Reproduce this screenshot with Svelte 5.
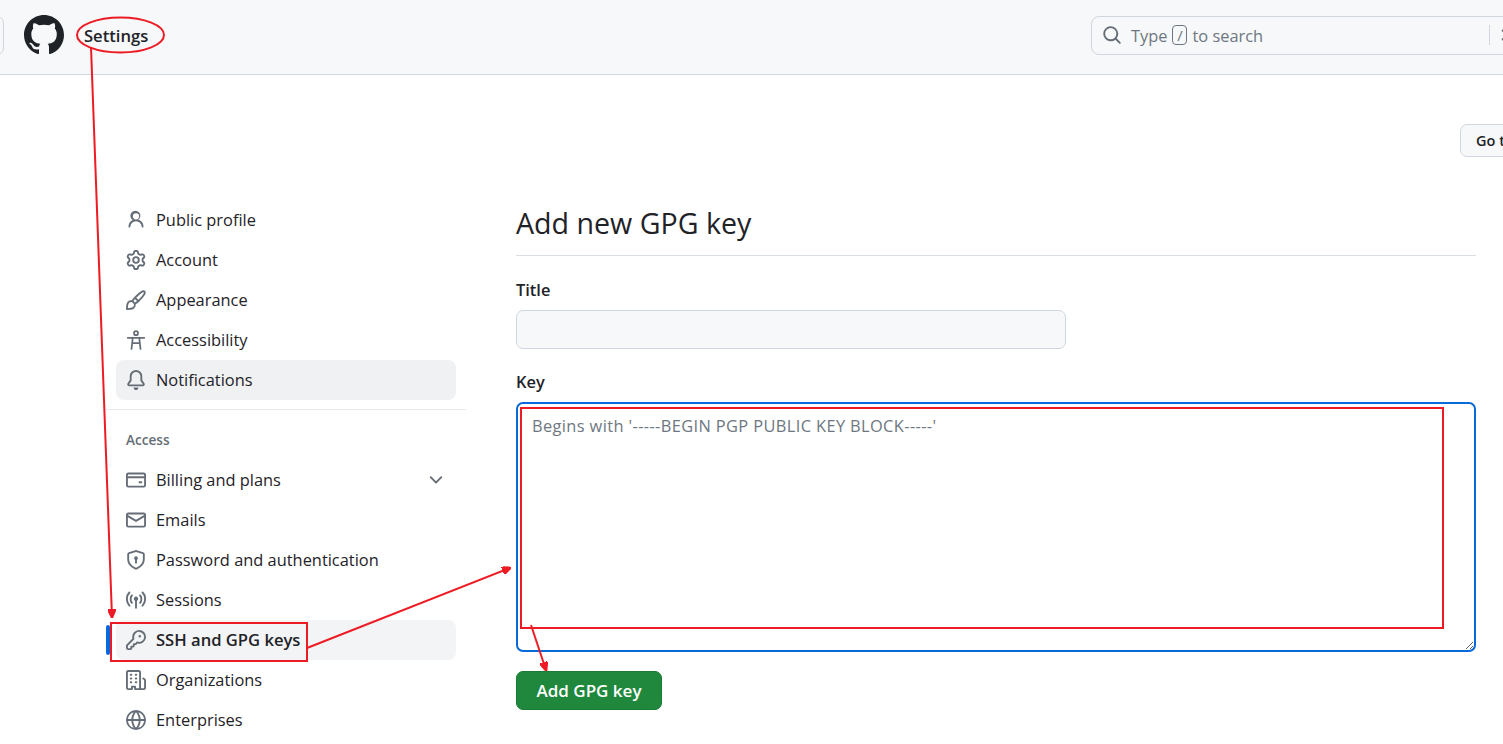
<script lang="ts">
  const icons: Record<string, string> = {
    person: "M10.561 8.073a6.005 6.005 0 0 1 3.432 5.142.75.75 0 1 1-1.498.07 4.5 4.5 0 0 0-8.99 0 .75.75 0 1 1-1.498-.07 6.004 6.004 0 0 1 3.431-5.142 3.999 3.999 0 1 1 4.123 0ZM10.5 5a2.5 2.5 0 1 0-5 0 2.5 2.5 0 0 0 5 0Z",
    gear: "M8 0a8.2 8.2 0 0 1 .701.031C9.444.095 9.99.645 10.16 1.29l.288 1.107c.018.066.079.158.212.224.231.114.454.243.668.386.123.082.233.09.299.071l1.103-.303c.644-.176 1.392.021 1.82.63.27.385.506.792.704 1.218.315.675.111 1.422-.364 1.891l-.814.806c-.049.048-.098.147-.088.294.016.257.016.515 0 .772-.01.147.038.246.088.294l.814.806c.475.469.679 1.216.364 1.891a7.977 7.977 0 0 1-.704 1.217c-.428.61-1.176.807-1.82.63l-1.102-.302c-.067-.019-.177-.011-.3.071a5.909 5.909 0 0 1-.668.386c-.133.066-.194.158-.211.224l-.29 1.106c-.168.646-.715 1.196-1.458 1.26a8.006 8.006 0 0 1-1.402 0c-.743-.064-1.289-.614-1.458-1.26l-.289-1.106c-.018-.066-.079-.158-.212-.224a5.738 5.738 0 0 1-.668-.386c-.123-.082-.233-.09-.299-.071l-1.103.303c-.644.176-1.392-.021-1.82-.63a8.12 8.12 0 0 1-.704-1.218c-.315-.675-.111-1.422.363-1.891l.815-.806c.05-.048.098-.147.088-.294a6.214 6.214 0 0 1 0-.772c.01-.147-.038-.246-.088-.294l-.815-.806C.635 6.045.431 5.298.746 4.623a7.92 7.92 0 0 1 .704-1.217c.428-.61 1.176-.807 1.82-.63l1.102.302c.067.019.177.011.3-.071.214-.143.437-.272.668-.386.133-.066.194-.158.211-.224l.29-1.106C6.009.645 6.556.095 7.299.03 7.53.01 7.764 0 8 0Zm-.571 1.525c-.036.003-.108.036-.137.146l-.289 1.105c-.147.561-.549.967-.998 1.189-.173.086-.34.183-.5.29-.417.278-.97.423-1.529.27l-1.103-.303c-.109-.03-.175.016-.195.045-.22.312-.412.644-.573.99-.014.031-.021.11.059.19l.815.806c.411.406.562.957.53 1.456a4.709 4.709 0 0 0 0 .582c.032.499-.119 1.05-.53 1.456l-.815.806c-.081.08-.073.159-.059.19.162.346.353.677.573.989.02.03.085.076.195.046l1.102-.303c.56-.153 1.113-.008 1.53.27.161.107.328.204.501.29.447.222.85.629.997 1.189l.289 1.105c.029.109.101.143.137.146a6.6 6.6 0 0 0 1.142 0c.036-.003.108-.036.137-.146l.289-1.105c.147-.561.549-.967.998-1.189.173-.086.34-.183.5-.29.417-.278.97-.423 1.529-.27l1.103.303c.109.029.175-.016.195-.045.22-.313.411-.644.573-.99.014-.031.021-.11-.059-.19l-.815-.806c-.411-.406-.562-.957-.53-1.456a4.709 4.709 0 0 0 0-.582c-.032-.499.119-1.05.53-1.456l.815-.806c.081-.08.073-.159.059-.19a6.464 6.464 0 0 0-.573-.989c-.02-.03-.085-.076-.195-.046l-1.102.303c-.56.153-1.113.008-1.53-.27a4.44 4.44 0 0 0-.501-.29c-.447-.222-.85-.629-.997-1.189l-.289-1.105c-.029-.11-.101-.143-.137-.146a6.6 6.6 0 0 0-1.142 0ZM11 8a3 3 0 1 1-6 0 3 3 0 0 1 6 0ZM9.5 8a1.5 1.5 0 1 0-3.001.001A1.5 1.5 0 0 0 9.5 8Z",
    brush: "M11.134 1.535c.7-.509 1.416-.942 2.076-1.155.649-.21 1.463-.267 2.069.34.603.601.568 1.411.368 2.07-.202.668-.624 1.39-1.125 2.096-1.011 1.424-2.496 2.987-3.775 4.249-1.098 1.084-2.132 1.839-3.04 2.3a3.744 3.744 0 0 1-1.055 3.217c-.431.431-1.065.691-1.657.861-.614.177-1.294.287-1.914.357A21.151 21.151 0 0 1 .797 16H.743l.007-.75H.749L.742 16a.75.75 0 0 1-.743-.742l.743-.008-.742.007v-.054a21.25 21.25 0 0 1 .13-2.284c.067-.647.187-1.287.358-1.914.17-.591.43-1.226.86-1.657a3.746 3.746 0 0 1 3.227-1.054c.466-.893 1.225-1.907 2.314-2.982 1.271-1.255 2.833-2.75 4.245-3.777ZM1.62 13.089c-.051.464-.086.929-.104 1.395.466-.018.932-.053 1.396-.104a10.511 10.511 0 0 0 1.668-.309c.526-.151.856-.325 1.011-.48a2.25 2.25 0 1 0-3.182-3.182c-.155.155-.329.485-.48 1.01a10.515 10.515 0 0 0-.309 1.67Zm10.396-10.34c-1.224.89-2.605 2.189-3.822 3.384l1.718 1.718c1.21-1.205 2.51-2.597 3.387-3.833.47-.662.78-1.227.912-1.662.134-.444.032-.551.009-.575h-.001V1.78c-.014-.014-.113-.113-.548.027-.432.14-.995.462-1.655.942Zm-4.832 7.266-.001.001a9.859 9.859 0 0 0 1.63-1.142L7.155 7.216a9.7 9.7 0 0 0-1.161 1.607c.482.302.889.71 1.19 1.192Z",
    bell: "M8 16c.9 0 1.7-.6 1.9-1.5.1-.3-.1-.5-.4-.5h-3c-.3 0-.5.2-.4.5.2.9 1 1.5 1.9 1.5ZM3 5a5 5 0 0 1 10 0v2.947c0 .05.015.098.042.139l1.703 2.555A1.519 1.519 0 0 1 13.482 13H2.518a1.516 1.516 0 0 1-1.263-2.36l1.703-2.554A.255.255 0 0 0 3 7.947Zm5-3.5A3.5 3.5 0 0 0 4.5 5v2.947c0 .346-.102.683-.294.97l-1.703 2.556a.017.017 0 0 0-.003.01l.001.006c0 .002.002.004.004.006l.006.004.007.001h10.964l.007-.001.006-.004.004-.006.001-.007a.017.017 0 0 0-.003-.01l-1.703-2.554a1.745 1.745 0 0 1-.294-.97V5A3.5 3.5 0 0 0 8 1.5Z",
    card: "M10.75 9a.75.75 0 0 0 0 1.5h1.5a.75.75 0 0 0 0-1.5h-1.5ZM0 3.75C0 2.784.784 2 1.75 2h12.5c.966 0 1.75.784 1.75 1.75v8.5A1.75 1.75 0 0 1 14.25 14H1.75A1.75 1.75 0 0 1 0 12.25ZM14.5 6.5h-13v5.75c0 .138.112.25.25.25h12.5a.25.25 0 0 0 .25-.25Zm0-2.75a.25.25 0 0 0-.25-.25H1.75a.25.25 0 0 0-.25.25V5h13Z",
    mail: "M1.75 2h12.5c.966 0 1.75.784 1.75 1.75v8.5A1.75 1.75 0 0 1 14.25 14H1.75A1.75 1.75 0 0 1 0 12.25v-8.5C0 2.784.784 2 1.75 2ZM1.5 12.251c0 .138.112.25.25.25h12.5a.25.25 0 0 0 .25-.25V5.809L8.38 9.397a.75.75 0 0 1-.76 0L1.5 5.809v6.442Zm13-8.181v-.32a.25.25 0 0 0-.25-.25H1.75a.25.25 0 0 0-.25.25v.32L8 7.88Z",
    shield: "m8.533.133 5.25 1.68A1.75 1.75 0 0 1 15 3.48V7c0 1.566-.32 3.182-1.303 4.682-.983 1.498-2.585 2.813-5.032 3.855a1.697 1.697 0 0 1-1.33 0c-2.447-1.042-4.049-2.357-5.032-3.855C1.32 10.182 1 8.566 1 7V3.48a1.75 1.75 0 0 1 1.217-1.667l5.25-1.68a1.748 1.748 0 0 1 1.066 0Zm-.61 1.429.001.001-5.25 1.68a.251.251 0 0 0-.174.237V7c0 1.36.275 2.666 1.057 3.859.784 1.194 2.121 2.342 4.366 3.298a.196.196 0 0 0 .154 0c2.245-.957 3.582-2.103 4.366-3.297C13.225 9.666 13.5 8.358 13.5 7V3.48a.25.25 0 0 0-.174-.238l-5.25-1.68a.25.25 0 0 0-.153 0ZM9.5 6.5c0 .536-.286 1.032-.75 1.3v2.45a.75.75 0 0 1-1.5 0V7.8A1.5 1.5 0 1 1 9.5 6.5Z",
    broadcast: "M8.75 8.582v5.668a.75.75 0 0 1-1.5 0V8.582a1.75 1.75 0 1 1 1.5 0Zm3.983-7.125a.75.75 0 0 1 1.06.026A7.72 7.72 0 0 1 16 7.25a7.72 7.72 0 0 1-2.207 5.767.75.75 0 1 1-1.086-1.034A6.22 6.22 0 0 0 14.5 7.25a6.22 6.22 0 0 0-1.793-4.733.75.75 0 0 1 .026-1.06Zm-9.466 0c.3.286.312.76.026 1.06A6.22 6.22 0 0 0 1.5 7.25a6.22 6.22 0 0 0 1.793 4.733.75.75 0 1 1-1.086 1.034A7.72 7.72 0 0 1 0 7.25a7.72 7.72 0 0 1 2.207-5.767.75.75 0 0 1 1.06-.026Zm8.556 2.321A4.72 4.72 0 0 1 13 7.25a4.72 4.72 0 0 1-1.177 3.472.75.75 0 1 1-1.146-.967A3.22 3.22 0 0 0 11.5 7.25a3.22 3.22 0 0 0-.823-2.505.75.75 0 0 1 1.146-.967Zm-6.492.958A3.22 3.22 0 0 0 4.5 7.25a3.22 3.22 0 0 0 .823 2.505.75.75 0 0 1-1.146.967A4.72 4.72 0 0 1 3 7.25a4.72 4.72 0 0 1 1.177-3.472.75.75 0 0 1 1.146.967Z",
    key: "M10.5 0a5.499 5.499 0 1 1-1.288 10.848l-.932.932a.749.749 0 0 1-.53.22H7v.75a.749.749 0 0 1-.22.53l-.5.5a.749.749 0 0 1-.53.22H5v.75a.749.749 0 0 1-.22.53l-.5.5a.749.749 0 0 1-.53.22h-2A1.75 1.75 0 0 1 0 14.25v-2c0-.199.079-.389.22-.53l4.932-4.932A5.5 5.5 0 0 1 10.5 0Zm-4 5.5c-.001.431.069.86.205 1.269a.75.75 0 0 1-.181.768L1.5 12.56v1.69c0 .138.112.25.25.25h1.69l.06-.06v-1.19a.75.75 0 0 1 .75-.75h1.19l.06-.06v-1.19a.75.75 0 0 1 .75-.75h1.19l1.023-1.025a.75.75 0 0 1 .768-.18A4 4 0 1 0 6.5 5.5ZM11 6a1 1 0 1 1 0-2 1 1 0 0 1 0 2Z",
    org: "M1.75 16A1.75 1.75 0 0 1 0 14.25V1.75C0 .784.784 0 1.75 0h8.5C11.216 0 12 .784 12 1.75v12.5c0 .085-.006.168-.018.25h2.268a.25.25 0 0 0 .25-.25V8.285a.25.25 0 0 0-.111-.208l-1.055-.703a.749.749 0 1 1 .832-1.248l1.055.703c.487.325.779.871.779 1.456v5.965A1.75 1.75 0 0 1 14.25 16h-3.5a.766.766 0 0 1-.197-.026c-.099.017-.2.026-.303.026h-3a.75.75 0 0 1-.75-.75V14h-1v1.25a.75.75 0 0 1-.75.75Zm-.25-1.75c0 .138.112.25.25.25H4v-1.25a.75.75 0 0 1 .75-.75h2.5a.75.75 0 0 1 .75.75v1.25h2.25a.25.25 0 0 0 .25-.25V1.75a.25.25 0 0 0-.25-.25h-8.5a.25.25 0 0 0-.25.25ZM3.75 6h.5a.75.75 0 0 1 0 1.5h-.5a.75.75 0 0 1 0-1.5ZM3 3.75A.75.75 0 0 1 3.75 3h.5a.75.75 0 0 1 0 1.5h-.5A.75.75 0 0 1 3 3.75Zm4 3A.75.75 0 0 1 7.75 6h.5a.75.75 0 0 1 0 1.5h-.5A.75.75 0 0 1 7 6.75ZM7.75 3h.5a.75.75 0 0 1 0 1.5h-.5a.75.75 0 0 1 0-1.5ZM3 9.75A.75.75 0 0 1 3.75 9h.5a.75.75 0 0 1 0 1.5h-.5A.75.75 0 0 1 3 9.75ZM7.75 9h.5a.75.75 0 0 1 0 1.5h-.5a.75.75 0 0 1 0-1.5Z",
    globe: "M8 0a8 8 0 1 1 0 16A8 8 0 0 1 8 0ZM5.78 8.75a9.64 9.64 0 0 0 1.363 4.177c.255.426.542.832.857 1.215.245-.296.551-.705.857-1.215A9.64 9.64 0 0 0 10.22 8.75Zm4.44-1.5a9.64 9.64 0 0 0-1.363-4.177c-.307-.51-.612-.919-.857-1.215a9.927 9.927 0 0 0-.857 1.215A9.64 9.64 0 0 0 5.78 7.25Zm-5.944 1.5H1.543a6.507 6.507 0 0 0 4.666 5.5c-.123-.181-.24-.365-.352-.552-.715-1.192-1.437-2.874-1.581-4.948Zm-2.733-1.5h2.733c.144-2.074.866-3.756 1.58-4.948.12-.197.237-.381.353-.552a6.507 6.507 0 0 0-4.666 5.5Zm10.181 1.5c-.144 2.074-.866 3.756-1.58 4.948-.12.197-.237.381-.353.552a6.507 6.507 0 0 0 4.666-5.5Zm2.733-1.5a6.507 6.507 0 0 0-4.666-5.5c.123.181.24.365.353.552.714 1.192 1.436 2.874 1.58 4.948Z",
    // drawn by stroke: head, arms, two legs and a hip bar
    access: "M8 .9a1.6 1.6 0 1 1 0 3.2 1.6 1.6 0 0 1 0-3.2ZM1.4 6.2H14.6M5.4 6.2 4.4 15.2M10.6 6.2l1 9M5 10.4h6"
  };

  const general = [
    { label: "Public profile", icon: "person" },
    { label: "Account", icon: "gear" },
    { label: "Appearance", icon: "brush" },
    { label: "Accessibility", icon: "access" },
    { label: "Notifications", icon: "bell", hover: true }
  ];

  const access = [
    { label: "Billing and plans", icon: "card", caret: true },
    { label: "Emails", icon: "mail" },
    { label: "Password and authentication", icon: "shield" },
    { label: "Sessions", icon: "broadcast" },
    { label: "SSH and GPG keys", icon: "key", current: true },
    { label: "Organizations", icon: "org" },
    { label: "Enterprises", icon: "globe" }
  ];
</script>

{#snippet navRow(item: any)}
  <li class="nav-row" class:hover={item.hover} class:current={item.current}>
    <svg class="nav-icon" class:stroked={item.icon === "access"} viewBox="0 0 16 16" aria-hidden="true"><path d={icons[item.icon]} /></svg>
    <span class="nav-label">{item.label}</span>
    {#if item.caret}
      <svg class="caret" viewBox="0 0 16 16" aria-hidden="true"><path d="M12.78 5.22a.749.749 0 0 1 0 1.06l-4.25 4.25a.749.749 0 0 1-1.06 0L3.22 6.28a.749.749 0 1 1 1.06-1.06L8 8.939l3.72-3.719a.749.749 0 0 1 1.06 0Z" /></svg>
    {/if}
  </li>
{/snippet}

<div class="page">
  <header class="topbar">
    <div class="left">
      <button class="menu-btn" aria-label="Menu"></button>
      <svg class="logo" viewBox="0 0 16 16" aria-hidden="true"><path d="M8 0c4.42 0 8 3.58 8 8a8.013 8.013 0 0 1-5.45 7.59c-.4.08-.55-.17-.55-.38 0-.27.01-1.13.01-2.2 0-.75-.25-1.23-.54-1.48 1.78-.2 3.65-.88 3.65-3.95 0-.88-.31-1.59-.82-2.15.08-.2.36-1.02-.08-2.12 0 0-.67-.22-2.2.82-.64-.18-1.32-.27-2-.27-.68 0-1.36.09-2 .27-1.53-1.03-2.2-.82-2.2-.82-.44 1.1-.16 1.92-.08 2.12-.51.56-.82 1.28-.82 2.15 0 3.06 1.86 3.75 3.64 3.95-.23.2-.44.55-.51 1.07-.46.21-1.61.55-2.33-.66-.15-.24-.6-.83-1.23-.82-.67.01-.27.38.01.53.34.19.73.9.82 1.13.16.45.68 1.31 2.69.94 0 .67.01 1.3.01 1.49 0 .21-.15.45-.55.38A7.995 7.995 0 0 1 0 8c0-4.42 3.58-8 8-8Z" /></svg>
      <span class="crumb">Settings</span>
    </div>
    <div class="search">
      <svg class="search-icon" viewBox="0 0 16 16" aria-hidden="true"><path d="M10.68 11.74a6 6 0 0 1-7.922-8.982 6 6 0 0 1 8.982 7.922l3.04 3.04a.749.749 0 0 1-.326 1.275.749.749 0 0 1-.734-.215ZM11.5 7a4.499 4.499 0 1 0-8.997 0A4.499 4.499 0 0 0 11.5 7Z" /></svg>
      <span>Type</span>
      <kbd>/</kbd>
      <span>to search</span>
      <i class="search-sep"></i>
      <svg class="search-cmd" viewBox="0 0 16 16" aria-hidden="true"><path d="M6.5 4 l4 4 -4 4" /></svg>
    </div>
  </header>

  <div class="profile-row">
    <button class="profile-btn">Go to your personal profile</button>
  </div>

  <div class="layout">
    <nav class="sidebar">
      <ul>
        {#each general as item}
          {@render navRow(item)}
        {/each}
      </ul>
      <hr />
      <h3>Access</h3>
      <ul>
        {#each access as item}
          {@render navRow(item)}
        {/each}
      </ul>
    </nav>

    <main class="content">
      <h2>Add new GPG key</h2>
      <label class="field-label" for="gpg-title">Title</label>
      <input id="gpg-title" class="title-input" type="text" />
      <label class="field-label key-label" for="gpg-key">Key</label>
      <textarea id="gpg-key" class="key-input" placeholder="Begins with '-----BEGIN PGP PUBLIC KEY BLOCK-----'"></textarea>
      <button class="submit">Add GPG key</button>
    </main>
  </div>

  <!-- red annotations drawn over the screenshot -->
  <svg class="notes" width="1503" height="744" aria-hidden="true">
    <defs>
      <marker id="head" markerWidth="9" markerHeight="8" refX="8" refY="4" orient="auto" markerUnits="userSpaceOnUse">
        <path d="M0 0 L9 4 L0 8 Z" fill="#ed1c24" />
      </marker>
    </defs>
    <ellipse cx="120.5" cy="35" rx="43.5" ry="17.5" />
    <line x1="91" y1="47" x2="112" y2="617" marker-end="url(#head)" />
    <rect x="111" y="623" width="196" height="38" />
    <line x1="307" y1="648" x2="510" y2="568" marker-end="url(#head)" />
    <rect x="521" y="408" width="922" height="220" />
    <line x1="531" y1="625" x2="546" y2="670" marker-end="url(#head)" />
  </svg>
</div>

<style>
  :global(body) {
    margin: 0;
    background: #fff;
    overflow: hidden;
  }

  .page {
    position: relative;
    width: 1503px;
    height: 744px;
    overflow: hidden;
    color: #1f2328;
    font-family: "Open Sans", "Noto Sans", sans-serif;
    font-size: 16.4px;
  }

  .topbar {
    box-sizing: border-box;
    display: flex;
    align-items: center;
    height: 75px;
    padding-bottom: 4px;
    background: #f6f8fa;
    border-bottom: 1px solid #d0d7de;
  }

  .left {
    display: flex;
    align-items: center;
    flex: 0 0 1091px;
    width: 1091px;
  }

  .menu-btn {
    flex: none;
    width: 40px;
    height: 39px;
    margin-left: -36px;
    background: #f6f8fa;
    border: 1px solid #d0d7de;
    border-radius: 7px;
  }

  .logo {
    flex: none;
    width: 40px;
    height: 40px;
    margin-left: 20px;
    fill: #1f2328;
  }

  .crumb {
    margin-left: 20px;
    font-weight: 600;
    font-size: 16.6px;
  }

  .search {
    display: flex;
    flex: none;
    align-items: center;
    width: 480px;
    height: 37px;
    padding-left: 10px;
    color: #6e7781;
    border: 1px solid #d0d7de;
    border-radius: 8px;
  }

  .search-icon {
    flex: none;
    width: 20px;
    height: 20px;
    margin-right: 9px;
    fill: #656d76;
  }

  kbd {
    display: flex;
    align-items: center;
    justify-content: center;
    box-sizing: border-box;
    width: 15px;
    height: 20px;
    margin: 0 5px;
    font-family: inherit;
    font-size: 15px;
    border: 1px solid #6e7781;
    border-radius: 4px;
  }

  .search-sep {
    width: 1px;
    height: 20px;
    margin-left: 226px;
    background: #d0d7de;
  }

  .search-cmd {
    flex: none;
    width: 20px;
    height: 20px;
    margin-left: 4px;
    fill: none;
    stroke: #656d76;
    stroke-width: 1.5;
  }

  .profile-row {
    display: flex;
    margin: 49px 0 43px 1460px;
    width: 300px;
  }

  .profile-btn {
    height: 33px;
    padding: 0 15px;
    white-space: nowrap;
    color: #1f2328;
    font: 600 14.5px "Open Sans", sans-serif;
    background: #f6f8fa;
    border: 1px solid #d0d7de;
    border-radius: 7px;
  }

  .layout {
    display: flex;
    align-items: flex-start;
  }

  .sidebar {
    flex: none;
    width: 360px;
    margin-left: 106px;
  }

  ul {
    margin: 0;
    padding: 0 10px;
    list-style: none;
  }

  .nav-row {
    position: relative;
    display: flex;
    align-items: center;
    gap: 10px;
    height: 40px;
    padding: 0 10px;
    border-radius: 8px;
  }

  .nav-label {
    margin-bottom: 2px;
  }

  .nav-row.hover {
    background: #eff1f3;
  }

  .nav-row.current {
    font-weight: 600;
    font-size: 16.6px;
    background: #f3f4f6;
  }

  .nav-row.current::before {
    content: "";
    position: absolute;
    top: 5px;
    left: -10px;
    width: 4px;
    height: 30px;
    background: #0969da;
    border-radius: 6px;
  }

  .nav-icon {
    flex: none;
    width: 20px;
    height: 20px;
    fill: #656d76;
  }

  .nav-icon.stroked {
    fill: none;
    stroke: #656d76;
    stroke-width: 1.4;
    stroke-linecap: round;
  }

  .caret {
    width: 20px;
    height: 20px;
    margin-left: auto;
    fill: #656d76;
  }

  hr {
    height: 1px;
    margin: 9px 0 0;
    background: #e8eaed;
    border: 0;
  }

  h3 {
    margin: 0;
    padding: 0 20px;
    height: 50px;
    line-height: 59px;
    font-size: 13.6px;
    font-weight: 600;
    color: #656d76;
  }

  .content {
    display: flex;
    flex: none;
    flex-direction: column;
    align-items: flex-start;
    width: 960px;
    margin-left: 50px;
  }

  h2 {
    box-sizing: border-box;
    width: 100%;
    height: 56px;
    margin: 0 0 22px;
    font-size: 28.6px;
    font-weight: 400;
    line-height: 46px;
    border-bottom: 1px solid #d8dee4;
  }

  .field-label {
    height: 24px;
    margin-bottom: 8px;
    font-weight: 600;
    font-size: 16.4px;
    line-height: 24px;
  }

  .key-label {
    margin-bottom: 8px;
  }

  .title-input {
    box-sizing: border-box;
    width: 550px;
    height: 39px;
    margin-bottom: 21px;
    background: #f6f8fa;
    border: 1px solid #d0d7de;
    border-radius: 7px;
  }

  .key-input {
    box-sizing: border-box;
    width: 100%;
    height: 250px;
    margin-bottom: 19px;
    padding: 11px 14px;
    font-family: inherit;
    font-size: 16.4px;
    line-height: 22px;
    letter-spacing: 0.38px;
    background: #fff;
    border: 2px solid #0969da;
    border-radius: 7px;
    outline: none;
  }

  .key-input::placeholder {
    color: #6e7781;
    opacity: 1;
  }

  .submit {
    width: 146px;
    height: 39px;
    padding: 0 0 1px;
    color: #fff;
    font: 600 17px "Open Sans", sans-serif;
    background: #1f883d;
    border: 1px solid #1c7a37;
    border-radius: 7px;
  }

  .notes {
    position: absolute;
    top: 0;
    left: 0;
    pointer-events: none;
    fill: none;
    stroke: #ed1c24;
    stroke-width: 2;
  }
</style>
